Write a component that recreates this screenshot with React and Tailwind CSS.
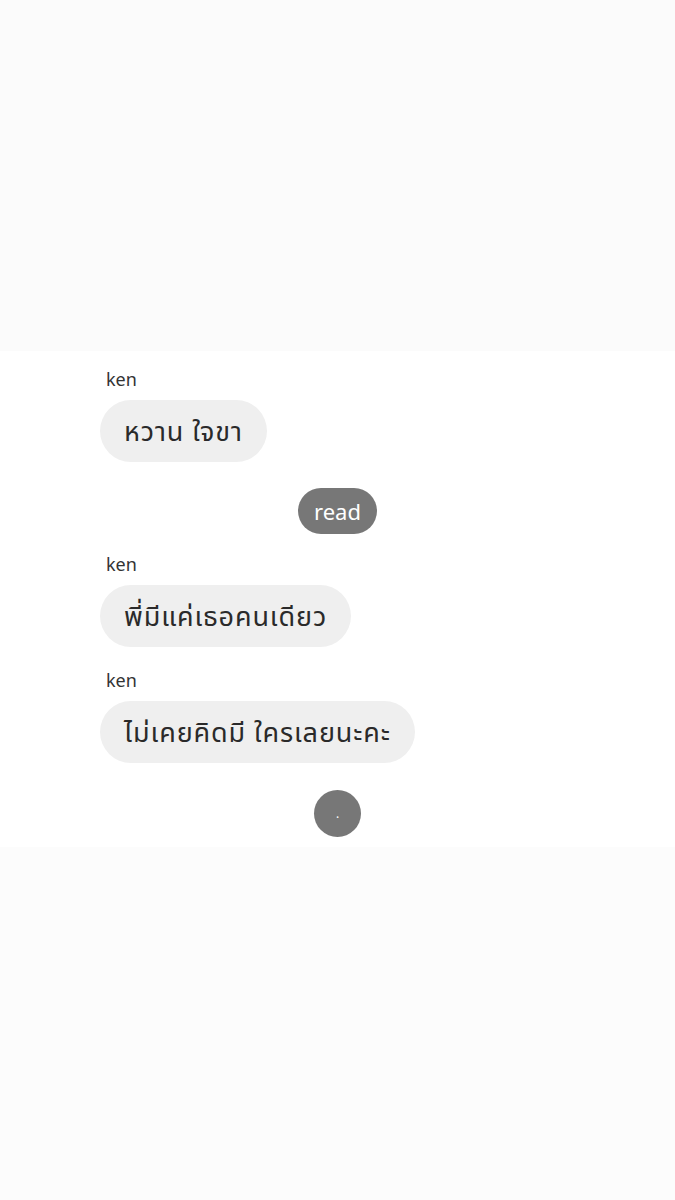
const messages = [
  { from: 'ken', text: 'หวาน ใจขา' },
  { read: 'read' },
  { from: 'ken', text: 'พี่มีแค่เธอคนเดียว' },
  { from: 'ken', text: 'ไม่เคยคิดมี ใครเลยนะคะ' },
];

const font = { fontFamily: '"Noto Sans", "Noto Sans Thai", "Liberation Sans", sans-serif' };

const Incoming = ({ from, text }) => (
  <div className="pl-[100px] flex flex-col items-start">
    <span className="ml-[6px] text-[18px] leading-[22px] text-[#333]">{from}</span>
    <div className="mt-[10px] h-[62px] px-6 flex items-center rounded-full bg-[#efefef] text-[27px] tracking-[0.9px] text-[#2a2a2a]">
      {text}
    </div>
  </div>
);

const App = () => {
  return (
    <div className="w-[675px] h-[1200px] flex flex-col bg-[#fcfcfc]" style={font}>
      <div className="h-[351px] bg-[#fbfbfb]" />

      <div className="bg-white pt-[17px] pb-[10px] flex flex-col">
        <Incoming {...messages[0]} />

        <div className="mt-[26px] flex justify-center">
          <div className="h-[46px] px-4 flex items-center rounded-full bg-[#777] text-white text-[22px]">
            read
          </div>
        </div>

        <div className="mt-[19px]">
          <Incoming {...messages[2]} />
        </div>
        <div className="mt-[22px]">
          <Incoming {...messages[3]} />
        </div>

        <div className="mt-[27px] flex justify-center">
          <div className="w-[47px] h-[47px] rounded-full bg-[#777] flex items-center justify-center text-white text-[12px] leading-none">
            .
          </div>
        </div>
      </div>
    </div>
  );
};

export default App;
